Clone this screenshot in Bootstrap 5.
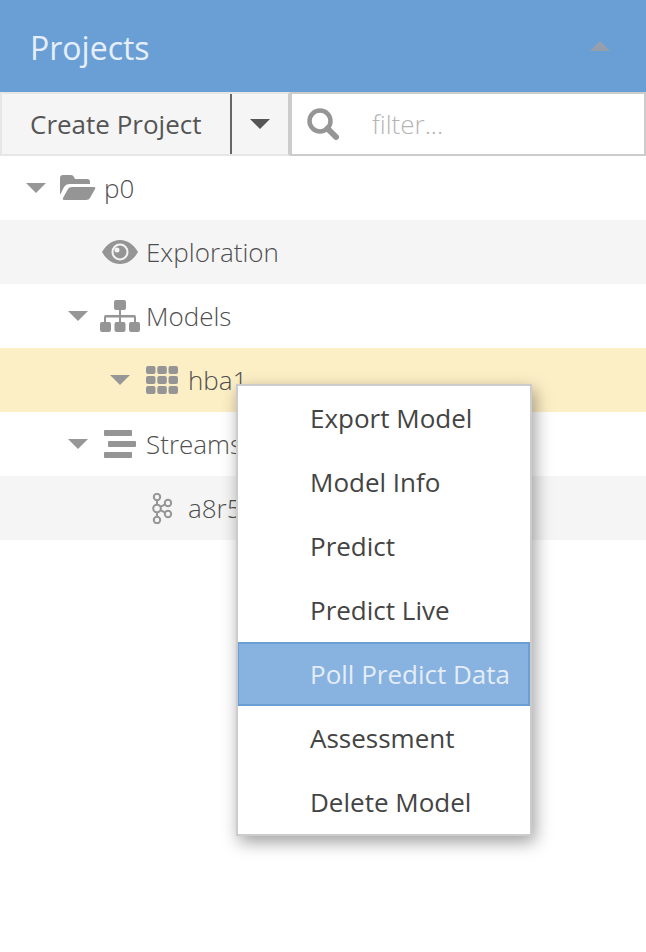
<!DOCTYPE html>
<html lang="en">
<head>
  <meta charset="UTF-8" />
  <meta name="viewport" content="width=device-width, initial-scale=1.0" />
  <title>Projects</title>
  <link href="https://cdn.jsdelivr.net/npm/bootstrap@5.3.0/dist/css/bootstrap.min.css" rel="stylesheet" />
  <style>
    body {
      background-color: #fff;
      color: #555;
      font-family: "Open Sans", sans-serif;
      font-size: 26px;
      font-weight: 300;
      position: relative;
      min-height: 952px;
      overflow: hidden;
    }
    .panel-head {
      height: 92px;
      background-color: #6a9fd6;
      color: #e6eff9;
      padding: 4px 36px 0 30px;
      font-size: 32px;
      font-weight: 400;
    }
    .head-caret {
      width: 0;
      height: 0;
      margin-top: -4px;
      border-left: 10px solid transparent;
      border-right: 10px solid transparent;
      border-bottom: 10px solid #979fac;
    }
    .tool-row { height: 64px; }
    .create-group {
      flex: 0 0 290px;
      height: 64px;
      border: 2px solid #e6e6e6;
      border-right-color: #ccc;
      border-radius: 0;
      background-color: #f5f5f5;
    }
    .create-group .btn {
      border: 0;
      border-radius: 0;
      background: transparent;
      color: #555;
      font-size: 26px;
      font-weight: 400;
      padding: 0;
    }
    .create-btn { flex: 0 0 230px !important; padding-left: 28px !important; text-align: left; border-right: 2px solid #666 !important; }
    .caret-btn { flex: 1 1 auto; }
    .caret-dark {
      display: block;
      width: 0;
      height: 0;
      border-left: 10px solid transparent;
      border-right: 10px solid transparent;
      border-top: 10px solid #555;
    }
    .filter-box {
      flex: 1 1 0;
      min-width: 0;
      height: 64px;
      border: 2px solid #ccc;
      padding-left: 15px;
    }
    .filter-box input {
      flex: 1 1 0;
      width: 0;
      min-width: 0;
      border: 0;
      outline: 0;
      padding: 0 0 0 33px;
      font-size: 26px;
      font-weight: 300;
      font-family: inherit;
      color: #555;
    }
    .filter-box input::placeholder { color: #b5b5b5; opacity: 1; }
    .tree-row { height: 64px; font-weight: 300; color: #4f4f4f; }
    .tree-row.striped { background-color: #f5f5f5; }
    .tree-row.picked { background-color: #fdefc5; }
    .lvl-0 { padding-left: 26px; }
    .lvl-1 { padding-left: 68px; }
    .lvl-2 { padding-left: 110px; }
    .tree-caret {
      flex: none;
      width: 20px;
      height: 0;
      border-left: 10px solid transparent;
      border-right: 10px solid transparent;
      border-top: 10px solid #979797;
    }
    .caret-gap { flex: none; width: 20px; }
    .tree-icon { flex: none; fill: #959595; display: block; }
    .node-menu.dropdown-menu {
      position: absolute;
      top: 384px;
      left: 236px;
      width: 296px;
      padding: 0;
      margin: 0;
      display: block;
      border: 2px solid #ccc;
      border-radius: 0;
      box-shadow: 3px 6px 16px rgba(0, 0, 0, .38);
    }
    .node-menu .dropdown-item {
      height: 64px;
      display: flex;
      align-items: center;
      padding: 0 0 0 72px;
      color: #444;
      font-size: 26px;
      font-weight: 400;
      border: 0;
    }
    .node-menu .dropdown-item.active {
      background-color: #88b2df;
      color: #e4edf7;
      border: 2px solid #6a9fd6;
      border-left-width: 1px;
      padding-left: 71px;
    }
  </style>
</head>
<body>
  <div class="panel-head d-flex align-items-center justify-content-between">
    <span>Projects</span>
    <span class="head-caret"></span>
  </div>

  <div class="tool-row d-flex">
    <div class="create-group btn-group" role="group">
      <button type="button" class="btn create-btn">Create Project</button>
      <button type="button" class="btn caret-btn d-flex align-items-center justify-content-center"><span class="caret-dark"></span></button>
    </div>
    <div class="filter-box d-flex align-items-center">
      <svg width="32" height="32" viewBox="0 0 32 32" class="flex-shrink-0">
        <circle cx="13" cy="13" r="10.5" fill="none" stroke="#959595" stroke-width="4.5"/>
        <path d="M20.5 20.5 L29 29" stroke="#959595" stroke-width="6" stroke-linecap="round"/>
      </svg>
      <input type="text" placeholder="filter..." />
    </div>
  </div>

  <div class="tree-row lvl-0 d-flex align-items-center">
    <span class="tree-caret"></span>
    <svg class="tree-icon" width="36" height="26" viewBox="0 0 36 26" style="margin-left:14px;margin-right:8px">
      <path d="M0 20V3q0-3 3-3h8q2 0 3 2l1 2h12q3 0 3 3v2H9q-3 0-5 3z"/>
      <path d="M5 25q-3 0-2-2l5-9q1-2 4-2h22q2 0 1 2l-5 9q-1 2-4 2z"/>
    </svg>
    <span>p0</span>
  </div>

  <div class="tree-row striped lvl-1 d-flex align-items-center">
    <span class="caret-gap"></span>
    <svg class="tree-icon" width="36" height="24" viewBox="0 0 36 24" style="margin-left:14px;margin-right:8px">
      <path fill-rule="evenodd" d="M0 12C4 5 10 0 18 0s14 5 18 12c-4 7-10 12-18 12S4 19 0 12zm18 8.500a8.500 8.500 0 1 0 0-17 8.500 8.500 0 0 0 0 17z"/>
      <path fill-rule="evenodd" d="M18 5.500a6.500 6.500 0 1 1 0 13 6.500 6.500 0 0 1 0-13zm-3 2a2.500 2.500 0 1 0 0 5 2.500 2.500 0 0 0 0-5z"/>
    </svg>
    <span>Exploration</span>
  </div>

  <div class="tree-row lvl-1 d-flex align-items-center">
    <span class="tree-caret"></span>
    <svg class="tree-icon" width="40" height="32" viewBox="0 0 40 32" style="margin-left:12px;margin-right:6px">
      <rect x="14" y="0" width="12" height="10" rx="2"/>
      <rect x="0" y="22" width="11" height="10" rx="2"/>
      <rect x="14.500" y="22" width="11" height="10" rx="2"/>
      <rect x="29" y="22" width="11" height="10" rx="2"/>
      <path d="M19 10h2v5h13q2 0 2 2v5h-2v-4.500H21V22h-2v-4.500H6V22H4v-5q0-2 2-2h13z"/>
    </svg>
    <span>Models</span>
  </div>

  <div class="tree-row picked lvl-2 d-flex align-items-center">
    <span class="tree-caret"></span>
    <svg class="tree-icon" width="32" height="28" viewBox="0 0 32 28" style="margin-left:16px;margin-right:10px">
      <rect x="0" y="0" width="9.500" height="8" rx="2"/><rect x="11.300" y="0" width="9.500" height="8" rx="2"/><rect x="22.500" y="0" width="9.500" height="8" rx="2"/>
      <rect x="0" y="10" width="9.500" height="8" rx="2"/><rect x="11.300" y="10" width="9.500" height="8" rx="2"/><rect x="22.500" y="10" width="9.500" height="8" rx="2"/>
      <rect x="0" y="20" width="9.500" height="8" rx="2"/><rect x="11.300" y="20" width="9.500" height="8" rx="2"/><rect x="22.500" y="20" width="9.500" height="8" rx="2"/>
    </svg>
    <span>hba1</span>
  </div>

  <div class="tree-row lvl-1 d-flex align-items-center">
    <span class="tree-caret"></span>
    <svg class="tree-icon" width="32" height="28" viewBox="0 0 32 28" style="margin-left:16px;margin-right:10px">
      <rect x="0" y="0" width="28" height="6" rx="1"/>
      <rect x="4" y="11" width="28" height="6" rx="1"/>
      <rect x="0" y="22" width="28" height="6" rx="1"/>
    </svg>
    <span>Streams</span>
  </div>

  <div class="tree-row striped lvl-2 d-flex align-items-center">
    <span class="caret-gap"></span>
    <svg width="20" height="31" viewBox="0 0 20 31" style="margin-left:22px;margin-right:16px" class="flex-shrink-0" fill="none" stroke="#959595" stroke-width="2">
      <circle cx="5" cy="4" r="3.200"/><circle cx="5" cy="15.500" r="3.800"/><circle cx="5" cy="27" r="3.200"/>
      <circle cx="16" cy="10" r="3.200"/><circle cx="16" cy="21" r="3.200"/>
      <path d="M5 7.200v4.500M5 19.300v4.500M8.400 13.800l4.800-2.400M8.400 17.200l4.800 2.400"/>
    </svg>
    <span>a8r5</span>
  </div>

  <ul class="dropdown-menu node-menu">
    <li><a class="dropdown-item" href="#">Export Model</a></li>
    <li><a class="dropdown-item" href="#">Model Info</a></li>
    <li><a class="dropdown-item" href="#">Predict</a></li>
    <li><a class="dropdown-item" href="#">Predict Live</a></li>
    <li><a class="dropdown-item active" href="#">Poll Predict Data</a></li>
    <li><a class="dropdown-item" href="#">Assessment</a></li>
    <li><a class="dropdown-item" href="#">Delete Model</a></li>
  </ul>

  <script src="https://cdn.jsdelivr.net/npm/bootstrap@5.3.0/dist/js/bootstrap.bundle.min.js"></script>
</body>
</html>
